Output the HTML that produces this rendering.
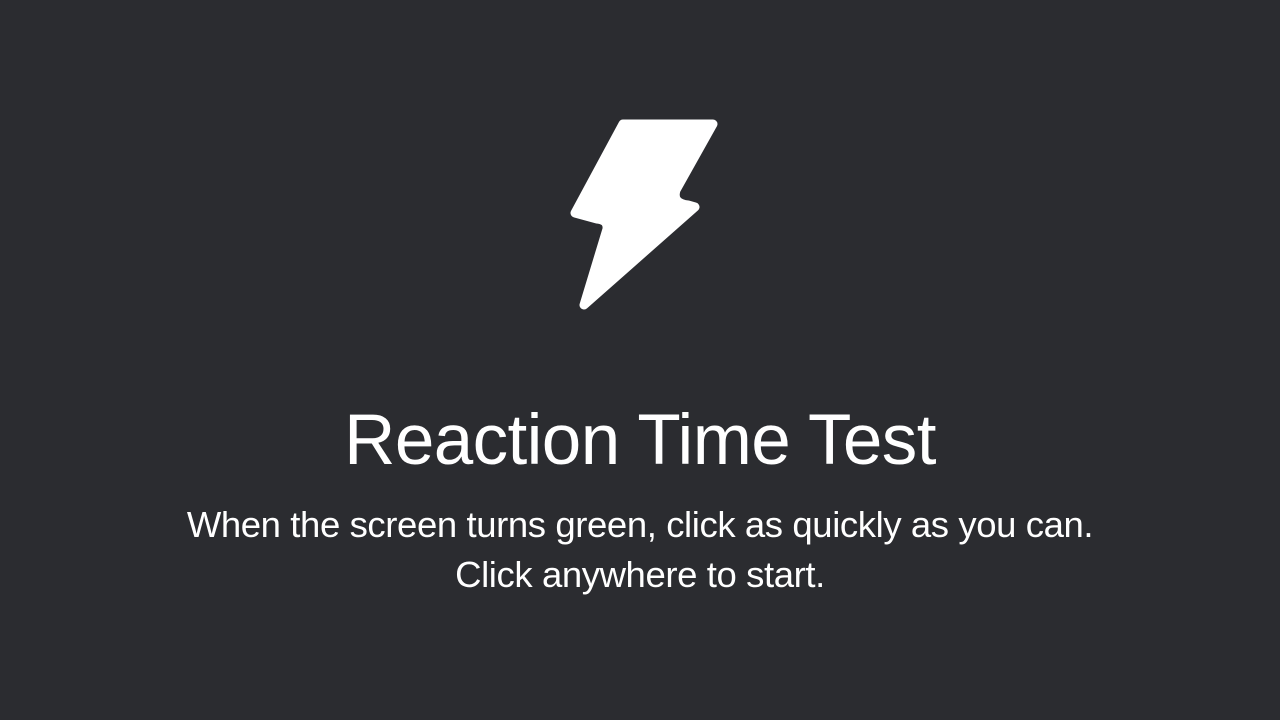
<!DOCTYPE html>
<html><head><style>
html,body{margin:0;padding:0;}
body{width:1280px;height:720px;background:#2b2c30;overflow:hidden;position:relative;font-family:"Liberation Sans",sans-serif;color:#fff;}
svg{position:absolute;left:0;top:0;}
h1{position:absolute;left:0;width:1280px;top:398px;margin:0;text-align:center;font-weight:normal;font-size:71px;line-height:86px;letter-spacing:-0.6px;}
.sub{position:absolute;left:0;width:1280px;top:500px;text-align:center;font-size:36.5px;line-height:50px;letter-spacing:-0.4px;}
</style></head><body>
<svg width="1280" height="720"><path d="M623,124 L713,124 L676,190 Q672,203 688,205 L695,207 L584,305 L607,229 Q608,220 597,219 L575,213 Z" fill="#fff" stroke="#fff" stroke-width="9" stroke-linejoin="round"/></svg>
<h1>Reaction Time Test</h1>
<div class="sub">When the screen turns green, click as quickly as you can.<br>Click anywhere to start.</div>
</body></html>
